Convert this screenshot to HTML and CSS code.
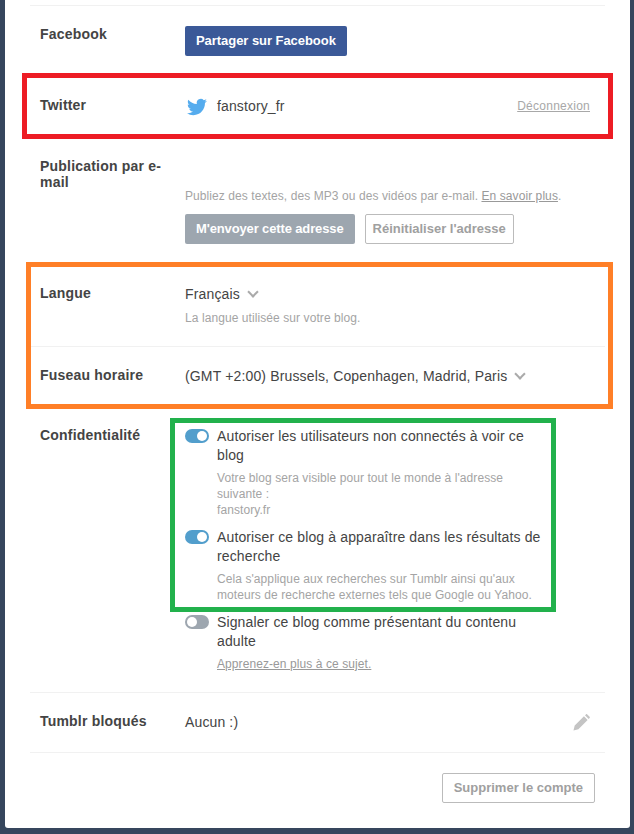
FILE: index.html
```html
<!DOCTYPE html>
<html lang="fr">
<head>
    <meta charset="UTF-8">
    <title>Paramètres du blog</title>
    <link rel="stylesheet" href="styles.css">
</head>
<body>
<div class="panel">
    <div class="row row--facebook">
        <div class="row__label">Facebook</div>
        <div class="row__value">
            <button class="btn btn--facebook">Partager sur Facebook</button>
        </div>
    </div>

    <div class="row row--twitter">
        <div class="row__label">Twitter</div>
        <div class="row__value twitter">
            <svg class="twitter__icon" viewBox="0 0 24 24" width="20" height="20">
                <path fill="#55acee" d="M23.95 4.57a10 10 0 0 1-2.82.77 4.96 4.96 0 0 0 2.16-2.72c-.95.56-2 .96-3.12 1.19a4.92 4.92 0 0 0-8.38 4.48C7.69 8.1 4.07 6.13 1.64 3.16a4.82 4.82 0 0 0-.67 2.48c0 1.71.87 3.21 2.19 4.1a4.9 4.9 0 0 1-2.23-.62v.06a4.92 4.92 0 0 0 3.95 4.83 5 5 0 0 1-2.21.08 4.94 4.94 0 0 0 4.6 3.42A9.87 9.87 0 0 1 0 19.54a13.94 13.94 0 0 0 7.55 2.21c9.05 0 14-7.5 14-13.98 0-.21 0-.42-.02-.63a9.94 9.94 0 0 0 2.46-2.55z"/>
            </svg>
            <span class="twitter__name">fanstory_fr</span>
            <a class="twitter__logout" href="#">Déconnexion</a>
        </div>
    </div>

    <div class="row row--email">
        <div class="row__label">Publication par e-mail</div>
        <div class="row__value">
            <p class="help help--email">Publiez des textes, des MP3 ou des vidéos par e-mail. <a href="#">En savoir plus</a>.</p>
            <div class="email__buttons">
                <button class="btn btn--grey">M'envoyer cette adresse</button>
                <button class="btn btn--outline btn--narrow">Réinitialiser l'adresse</button>
            </div>
        </div>
    </div>

    <div class="row row--lang">
        <div class="row__label">Langue</div>
        <div class="row__value">
            <div class="select">Français <span class="select__arrow"></span></div>
            <p class="help help--lang">La langue utilisée sur votre blog.</p>
        </div>
    </div>

    <div class="row row--zone">
        <div class="row__label">Fuseau horaire</div>
        <div class="row__value">
            <div class="select">(GMT +2:00) Brussels, Copenhagen, Madrid, Paris <span class="select__arrow"></span></div>
        </div>
    </div>

    <div class="row row--privacy">
        <div class="row__label">Confidentialité</div>
        <div class="row__value">
            <div class="option">
                <span class="toggle toggle--on"></span>
                <div class="option__text">
                    <div class="option__title">Autoriser les utilisateurs non connectés à voir ce blog</div>
                    <p class="help">Votre blog sera visible pour tout le monde à l'adresse suivante :<br>fanstory.fr</p>
                </div>
            </div>
            <div class="option">
                <span class="toggle toggle--on"></span>
                <div class="option__text">
                    <div class="option__title">Autoriser ce blog à apparaître dans les résultats de recherche</div>
                    <p class="help">Cela s'applique aux recherches sur Tumblr ainsi qu'aux moteurs de recherche externes tels que Google ou Yahoo.</p>
                </div>
            </div>
            <div class="option">
                <span class="toggle"></span>
                <div class="option__text">
                    <div class="option__title">Signaler ce blog comme présentant du contenu adulte</div>
                    <p class="help"><a href="#">Apprenez-en plus à ce sujet.</a></p>
                </div>
            </div>
        </div>
    </div>

    <div class="row row--blocked">
        <div class="row__label">Tumblr bloqués</div>
        <div class="row__value blocked">
            <span>Aucun :)</span>
            <svg class="blocked__edit" viewBox="0 0 18 18" width="17" height="17">
                <path fill="#c4c4c4" d="M0.5 17.5l1.3-5.2L11.6 2.5l3.9 3.9-9.8 9.8zM12.7 1.4l1-1c.4-.4 1-.4 1.4 0l2.5 2.5c.4.4.4 1 0 1.4l-1 1z"/>
            </svg>
        </div>
    </div>

    <div class="panel__footer">
        <button class="btn btn--outline">Supprimer le compte</button>
    </div>

    <!-- coloured boxes drawn on top of the screenshot -->
    <div class="mark mark--red"></div>
    <div class="mark mark--orange"></div>
    <div class="mark mark--green"></div>
</div>
</body>
</html>
```

FILE: styles.css
```css
html, body {
    margin: 0;
    height: 100%;
}

body {
    background-color: #36465d;
    font-family: "Liberation Sans", Arial, sans-serif;
    font-size: 14px;
    color: #444;
    overflow: hidden;
}

.panel {
    position: relative;
    width: 625px;
    height: 828px;
    margin-left: 5px;
    padding: 5px 25px 0;
    box-sizing: border-box;
    background-color: #fff;
    border-radius: 0 0 3px 3px;
}

.row {
    display: grid;
    grid-template-columns: 145px 1fr;
    padding: 20px 15px 20px 10px;
    border-top: 1px solid #f1f1f1;
}

.row__label {
    font-weight: bold;
    line-height: 17px;
    letter-spacing: 0.2px;
    width: 125px;
}

.row__value {
    line-height: 19px;
    letter-spacing: 0.13px;
}

.row--twitter,
.row--email {
    border-top: 0;
}

.row--twitter {
    height: 62px;
    padding-top: 21px;
    box-sizing: border-box;
}

.row--email .row__label {
    line-height: 16px;
}

.twitter {
    display: flex;
    align-items: center;
    height: 19px;
}

.twitter__icon {
    margin: 0 10px 0 2px;
}

.twitter__name {
    flex: 1;
}

.twitter__logout {
    font-size: 12px;
    letter-spacing: 0.25px;
    color: #a8a8a8;
}

.btn {
    height: 30px;
    padding: 0 10px 2px;
    font-family: inherit;
    font-size: 13px;
    font-weight: bold;
    letter-spacing: 0;
    border-radius: 2px;
    border: 1px solid transparent;
    box-sizing: border-box;
}

.btn--facebook {
    background-color: #3b5998;
    color: #fff;
    letter-spacing: -0.05px;
}

.btn--grey {
    background-color: #9da6af;
    color: #fff;
    letter-spacing: -0.13px;
}

.btn--outline {
    background-color: #fff;
    border-color: #bbb;
    color: #a0a0a0;
}

.btn--narrow {
    padding: 0 7px 2px;
}

.help {
    margin: 0;
    font-size: 12px;
    line-height: 16px;
    letter-spacing: 0.08px;
    color: #a4a4a4;
}

.help a {
    color: #999;
}

.help--email {
    margin-top: 30px;
}

.help--lang {
    margin-top: 6px;
}

.email__buttons {
    display: flex;
    gap: 10px;
    margin-top: 10px;
}

.select {
    letter-spacing: 0.15px;
}

.select__arrow {
    display: inline-block;
    width: 6px;
    height: 6px;
    margin: 0 3px 3px 5px;
    border-right: 2px solid #aaa;
    border-bottom: 2px solid #aaa;
    transform: rotate(45deg);
}

.option {
    display: flex;
    width: 360px;
    margin-bottom: 10px;
}

.option:last-child {
    margin-bottom: 0;
}

.option__title {
    line-height: 19px;
}

.option__text .help {
    margin-top: 5px;
}

.toggle {
    position: relative;
    flex: none;
    width: 24px;
    height: 14px;
    margin: 2px 8px 0 0;
    border-radius: 7px;
    background-color: #9da6af;
}

.toggle::after {
    content: "";
    position: absolute;
    top: 2px;
    left: 2px;
    width: 10px;
    height: 10px;
    border-radius: 50%;
    background-color: #fff;
}

.toggle--on {
    background-color: #529ecc;
}

.toggle--on::after {
    left: 12px;
}

.blocked {
    display: flex;
    justify-content: space-between;
    align-items: center;
}

.panel__footer {
    display: flex;
    justify-content: flex-end;
    padding: 20px 10px 0 0;
    border-top: 1px solid #f1f1f1;
}

.panel__footer .btn {
    padding: 0 11px 2px;
}

.mark {
    position: absolute;
    box-sizing: border-box;
    pointer-events: none;
}

.mark--red {
    left: 17px;
    top: 73px;
    width: 591px;
    height: 66px;
    border: 5px solid #ed1c24;
}

.mark--orange {
    left: 21px;
    top: 262px;
    width: 587px;
    height: 147px;
    border: 5px solid #ff7f27;
}

.mark--green {
    left: 165px;
    top: 418px;
    width: 386px;
    height: 194px;
    border: 5px solid #22b14c;
}
```
